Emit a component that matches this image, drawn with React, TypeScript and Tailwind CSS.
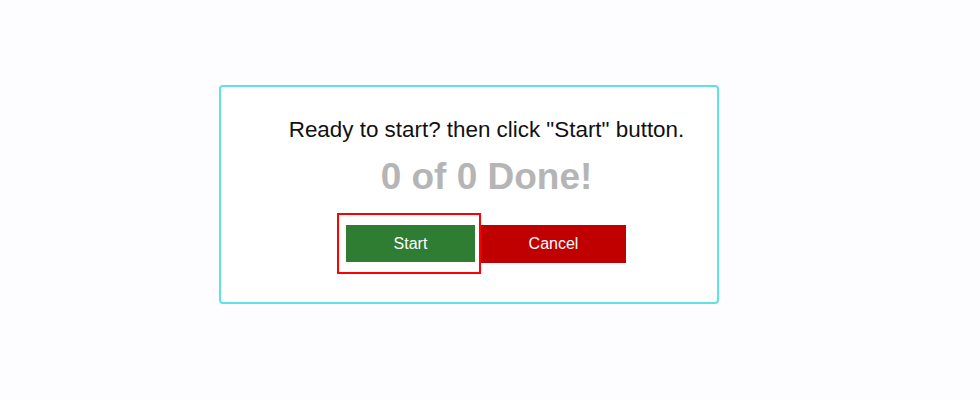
import React from 'react';

export default function App() {
  return (
    <div className="min-h-[400px] w-full bg-[#fdfcfe] pt-[85px] pl-[219px] font-['Liberation_Sans',Arial,sans-serif]">
      <div className="flex h-[219px] w-[500px] flex-col items-center rounded-[4px] border-2 border-[#5fe1e6] bg-white pl-[35px]">
        {/* Prompt */}
        <p className="mt-[30px] text-[22.4px] leading-[26px] text-[#111111]">
          Ready to start? then click "Start" button.
        </p>
        <h2 className="mt-[13px] text-[37px] font-bold leading-[42px] text-[#b5b5b5]">0 of 0 Done!</h2>

        {/* Actions */}
        <div className="mt-[15px] mr-[10px] flex items-start">
          <div className="border-2 border-[#ff0000] pt-[10px] pr-[4px] pb-[10px] pl-[7px]">
            <button className="flex h-[37px] w-[129px] items-center justify-center bg-[#2e7d32] text-[16px] text-white">
              Start
            </button>
          </div>
          <button className="mt-[12px] flex h-[38px] w-[145px] items-center justify-center bg-[#c00000] text-[16px] text-white">
            Cancel
          </button>
        </div>
      </div>
    </div>
  );
}
